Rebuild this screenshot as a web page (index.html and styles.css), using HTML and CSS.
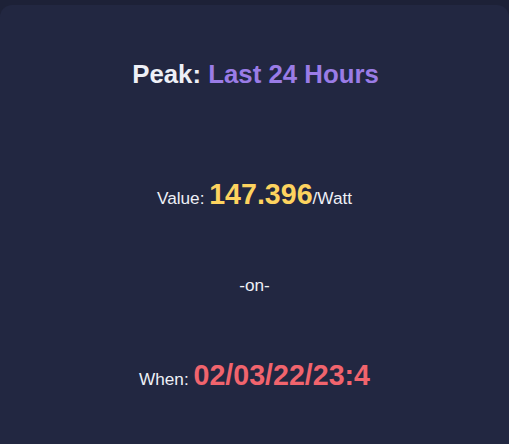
FILE: index.html
```html
<!DOCTYPE html>
<html>
<head>
<meta charset="utf-8">
<link rel="stylesheet" href="styles.css">
</head>
<body>
<div class="card">
  <h2 class="title">Peak: <span class="accent">Last 24 Hours</span></h2>
  <p class="row row-value">Value: <span class="big yellow">147.396</span>/Watt</p>
  <p class="row row-on">-on-</p>
  <p class="row row-when">When: <span class="big red">02/03/22/23:4</span></p>
</div>
</body>
</html>
```
FILE: styles.css
```css
html, body {
  margin: 0;
  padding: 0;
  background: #1d2137;
  height: 100%;
  overflow: hidden;
}
body {
  padding-top: 5px;
  font-family: "Liberation Sans", Arial, sans-serif;
  color: #eef0f6;
}
.card {
  background: #222741;
  border-radius: 12px;
  height: 460px;
  display: flex;
  flex-direction: column;
  align-items: center;
  box-sizing: border-box;
  padding-top: 55px;
}
.title {
  margin: 0 0 0 2px;
  font-size: 25.8px;
  font-weight: bold;
  line-height: 28px;
}
.accent { color: #9a7ce6; }
.row {
  margin: 0;
  font-size: 17.2px;
  line-height: 32px;
}
.big {
  font-size: 28.6px;
  font-weight: bold;
}
.yellow { color: #fdd35f; }
.red { color: #f1646d; }
.row-value { margin-top: 90px; }
.row-on { margin-top: 55px; }
.row-when { margin-top: 58px; }
```
